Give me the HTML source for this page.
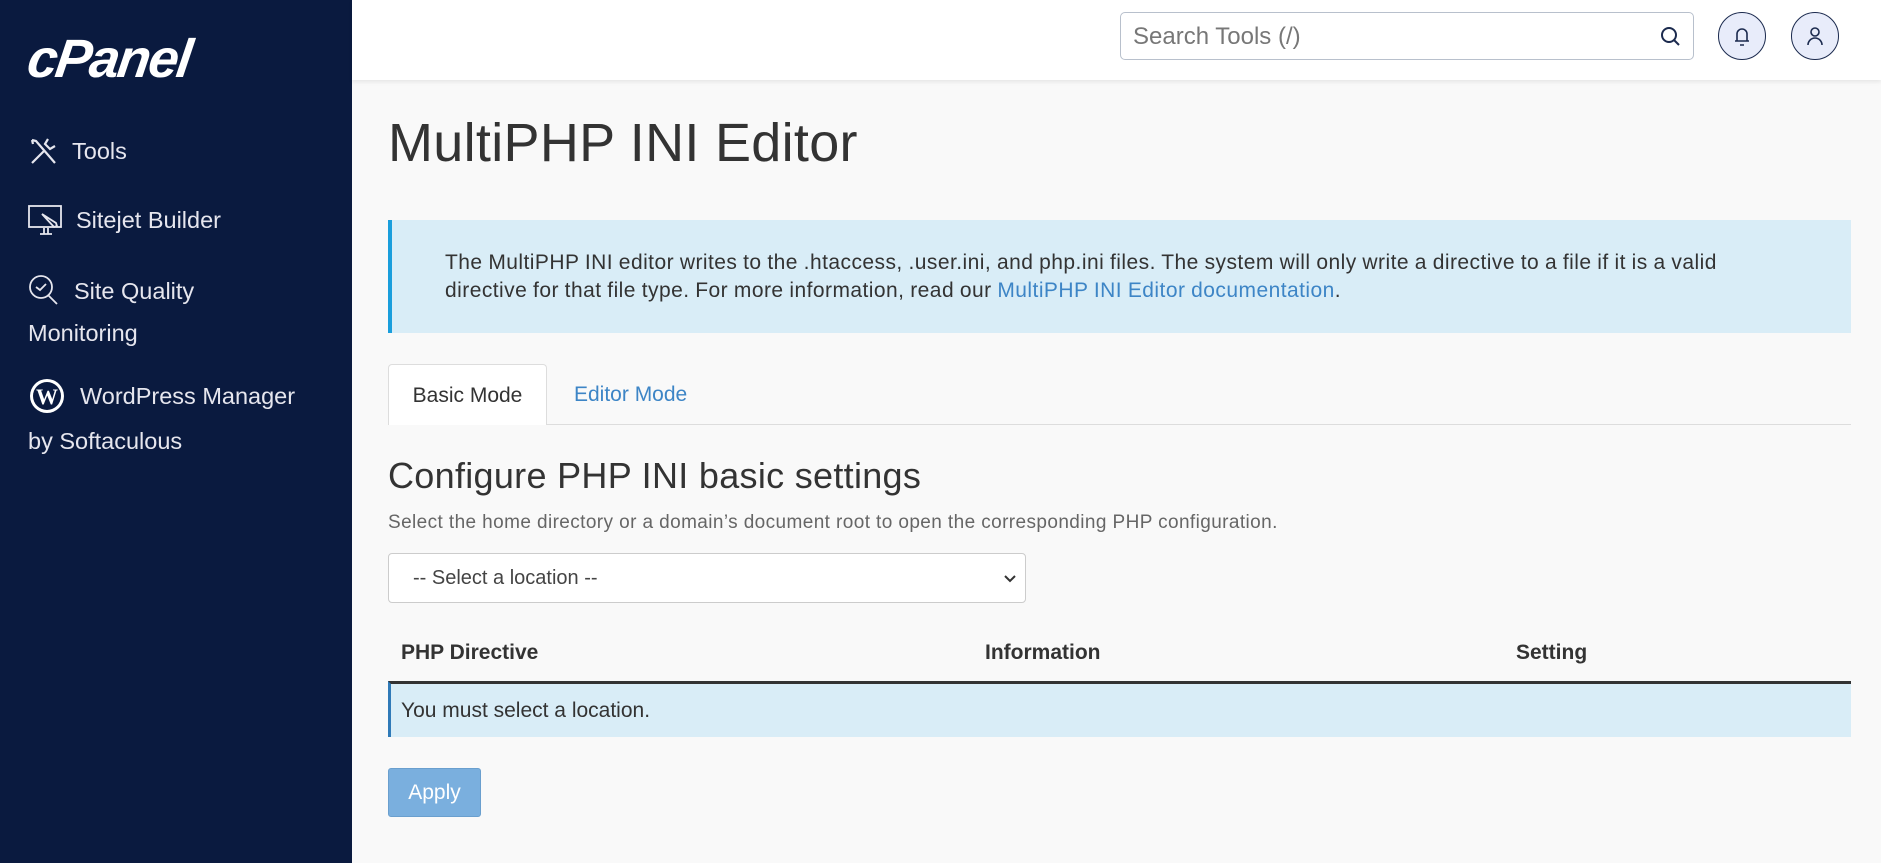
<!DOCTYPE html>
<html><head><meta charset="utf-8"><style>
*{box-sizing:border-box;margin:0;padding:0}
body{width:1881px;height:863px;overflow:hidden;background:#f9f9f9;font-family:"Liberation Sans",sans-serif;color:#333;position:relative}
.side{position:absolute;left:0;top:0;width:352px;height:863px;background:#0a1a3f;color:#e8e8ee}
.logo{position:absolute;left:28px;top:28px;font:italic 900 54px "Liberation Sans",sans-serif;color:#fff;letter-spacing:-2px;transform:skewX(-8deg)}
.nav{position:absolute;left:28px;font-size:23.5px;color:#e6e6ee;display:flex;align-items:center}
.nav svg{margin-right:14px}
.hdr{position:absolute;left:352px;top:0;right:0;height:80px;background:#fff;box-shadow:0 2px 4px rgba(0,0,0,.08)}
.search{position:absolute;left:1120px;top:12px;width:574px;height:48px;border:1px solid #b8c0cc;border-radius:5px;background:#fff;font-size:24px;color:#777;padding:10px 12px}
.circ{position:absolute;top:12px;width:48px;height:48px;border-radius:50%;border:1.5px solid #1b2a4e;background:#e8ecfa;display:flex;align-items:center;justify-content:center}
h1{position:absolute;left:388px;top:112px;font-weight:300;font-size:54px;color:#333;letter-spacing:0.3px}
.info{position:absolute;left:388px;top:220px;width:1463px;height:113px;background:#d9edf7;border-left:4px solid #1a9edc;padding:29px 0 0 53px;font-size:21px;line-height:28px;color:#333;letter-spacing:0.45px;word-spacing:-0.5px}
a{color:#3d85c6;text-decoration:none}
.tabline{position:absolute;left:388px;top:424px;width:1463px;border-top:1px solid #ddd}
.tab{position:absolute;top:364px;height:61px;font-size:21px;padding-top:19px}
.tab.act{left:388px;width:159px;background:#fff;border:1px solid #ddd;border-bottom:none;border-radius:4px 4px 0 0;text-align:center}
h2{position:absolute;left:388px;top:455px;font-weight:400;font-size:36px;color:#333;letter-spacing:0.3px}
.sub{position:absolute;left:388px;top:512px;font-size:19px;color:#666;letter-spacing:0.4px}
.sel{position:absolute;left:388px;top:553px;width:638px;height:50px;background:#fff;border:1px solid #ccc;border-radius:4px;font-size:20px;padding:13px 24px;color:#444}
.th{position:absolute;top:641px;font-weight:bold;font-size:21px;color:#333}
.row{position:absolute;left:388px;top:681px;width:1463px;height:56px;border-top:3px solid #333;background:#d9edf7;border-left:3px solid #2f7ab8;padding:15px 10px;font-size:21px;color:#333}
.btn{position:absolute;left:388px;top:768px;width:93px;height:49px;background:#7aafde;border:1px solid #6a9fce;border-radius:3px;color:#fff;font-size:21px;text-align:center;padding-top:12px}
</style></head><body>
<div class="side">
<div class="logo">cPanel</div>
<div class="nav" style="top:136px"><svg width="30" height="30" viewBox="0 0 30 30" fill="none" stroke="#e6e6ee" stroke-width="2.2"><path d="M4 27L17 14M20 3l-3 5 5 5 5-3M4 4l4 1 19 22M4 4l1 4"/></svg>Tools</div>
<div class="nav" style="top:204px"><svg width="34" height="32" viewBox="0 0 34 32" fill="none" stroke="#e6e6ee" stroke-width="1.8"><rect x="1" y="2" width="32" height="21"/><path d="M12 30h12M16 24v6M20 24v6M14 10l12 13 3-1-1-3z"/></svg>Sitejet Builder</div>
<div class="nav" style="top:274px"><svg width="32" height="34" viewBox="0 0 32 34" fill="none" stroke="#e6e6ee" stroke-width="1.8"><circle cx="13" cy="13" r="11"/><path d="M8 13l4 3 6-6M20 21l9 9"/></svg>Site Quality</div>
<div class="nav" style="top:320px">Monitoring</div>
<div class="nav" style="top:377px"><svg width="38" height="38" viewBox="0 0 38 38"><circle cx="19" cy="19" r="17" fill="#fff"/><circle cx="19" cy="19" r="14" fill="#0a1a3f"/><text x="19" y="27" text-anchor="middle" font-family="Liberation Serif" font-weight="bold" font-size="22" fill="#fff">W</text></svg>WordPress Manager</div>
<div class="nav" style="top:428px">by Softaculous</div>
</div>
<div class="hdr"></div>
<div class="search">Search Tools (/)<svg style="position:absolute;right:12px;top:12px" width="22" height="22" viewBox="0 0 22 22" fill="none" stroke="#1b2a4e" stroke-width="2"><circle cx="10" cy="10" r="7"/><path d="M15 15l5 5"/></svg></div>
<div class="circ" style="left:1718px"><svg width="20" height="22" viewBox="0 0 20 22" fill="none" stroke="#1b2a4e" stroke-width="1.6"><path d="M5 16V9a5 5 0 0110 0v7M3 16h14M8 20h4"/></svg></div>
<div class="circ" style="left:1791px"><svg width="20" height="22" viewBox="0 0 20 22" fill="none" stroke="#1b2a4e" stroke-width="1.6"><circle cx="10" cy="7" r="4"/><path d="M3 20a7 7 0 0114 0"/></svg></div>
<h1>MultiPHP INI Editor</h1>
<div class="info">The MultiPHP INI editor writes to the .htaccess, .user.ini, and php.ini files. The system will only write a directive to a file if it is a valid<br>directive for that file type. For more information, read our <a>MultiPHP INI Editor documentation</a>.</div>
<div class="tabline"></div>
<div class="tab act">Basic Mode</div>
<div class="tab" style="left:574px;color:#3d85c6">Editor Mode</div>
<h2>Configure PHP INI basic settings</h2>
<div class="sub">Select the home directory or a domain’s document root to open the corresponding PHP configuration.</div>
<div class="sel">-- Select a location --<svg style="position:absolute;right:8px;top:20px" width="14" height="10" viewBox="0 0 14 10" fill="none" stroke="#333" stroke-width="2"><path d="M2 2l5 5 5-5"/></svg></div>
<div class="th" style="left:401px">PHP Directive</div>
<div class="th" style="left:985px">Information</div>
<div class="th" style="left:1516px">Setting</div>
<div class="row">You must select a location.</div>
<div class="btn">Apply</div>
</body></html>
